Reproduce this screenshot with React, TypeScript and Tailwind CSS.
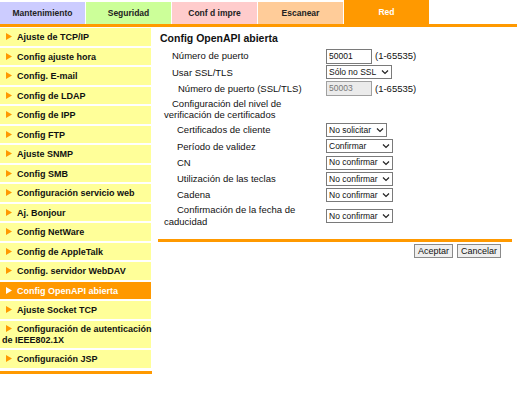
import React from 'react'

const tabs = [
  { label: 'Mantenimiento', bg: 'bg-[#ccccff]', active: false },
  { label: 'Seguridad', bg: 'bg-[#ccff99]', active: false },
  { label: 'Conf d impre', bg: 'bg-[#ffcccc]', active: false },
  { label: 'Escanear', bg: 'bg-[#ffcc99]', active: false },
  { label: 'Red', bg: 'bg-[#ff9900]', active: true },
]

const menu = [
  'Ajuste de TCP/IP',
  'Config ajuste hora',
  'Config. E-mail',
  'Config de LDAP',
  'Config de IPP',
  'Config FTP',
  'Ajuste SNMP',
  'Config SMB',
  'Configuración servicio web',
  'Aj. Bonjour',
  'Config NetWare',
  'Config de AppleTalk',
  'Config. servidor WebDAV',
  'Config OpenAPI abierta',
  'Ajuste Socket TCP',
  'Configuración de autenticación de IEEE802.1X',
  'Configuración JSP',
]

function Arrow({ white }: { white?: boolean }) {
  return (
    <svg width="6" height="7" viewBox="0 0 6 7" className="inline-block mr-[5px] align-[0px]">
      <polygon points="0,0 6,3.5 0,7" fill={white ? '#ffffff' : '#ff9900'} />
    </svg>
  )
}

function Select({ value, w }: { value: string; w: string }) {
  return (
    <div className={`${w} h-[14px] border border-[#7a7a7a] bg-white flex items-center justify-between pl-[2px] pr-[2px]`}>
      <span className="text-[8.5px] leading-none">{value}</span>
      <svg width="8" height="6" viewBox="0 0 8 6">
        <polyline points="1,1.5 4,4.5 7,1.5" fill="none" stroke="#222" strokeWidth="1.2" />
      </svg>
    </div>
  )
}

function Row({ label, indent, children, two }: { label: React.ReactNode; indent: string; children?: React.ReactNode; two?: boolean }) {
  return (
    <div className={`flex items-center ${two ? 'h-[25px]' : 'h-[16.3px]'}`}>
      <div className="w-[162px] leading-[11.5px]">
        <span className={`inline-block ${indent}`} />
        {label}
      </div>
      <div className="flex items-center gap-[3px]">{children}</div>
    </div>
  )
}

export default function App() {
  return (
    <div className="w-[517px] h-[415px] bg-white text-black" style={{ fontFamily: '"Liberation Sans", Arial, sans-serif' }}>
      {/* tabs */}
      <div className="flex h-[24px] gap-[1px]">
        {tabs.map((t) => (
          <div key={t.label} className={`w-[85px] ${t.active ? 'pt-0' : 'pt-[2px]'} flex`}>
            <div className={`${t.bg} flex-1 flex items-center justify-center text-[8.5px] font-bold ${t.active ? 'text-white' : 'text-[#222]'}`}>
              {t.label}
            </div>
          </div>
        ))}
      </div>
      <div className="h-[3px] bg-[#ff9900]" />

      <div className="flex pt-[1px]">
        {/* sidebar */}
        <div className="w-[151px] flex flex-col">
          {menu.map((m, i) => {
            const active = i === 13
            const two = m.length > 30
            return (
              <div
                key={m}
                className={`${active ? 'bg-[#ff9900] text-white' : 'bg-[#ffff99] text-[#111]'} ${two ? 'h-[27.5px] pt-[3px] leading-[11px]' : 'h-[17.5px] flex items-center pt-[2px]'} mb-[2px] pl-[6px] text-[9px] font-bold whitespace-nowrap`}
              >
                {two ? (
                  <>
                    <div>
                      <Arrow />
                      <span>Configuración de autenticación</span>
                    </div>
                    <div className="-ml-[4px]">de IEEE802.1X</div>
                  </>
                ) : (
                  <span>
                    <Arrow white={active} />
                    {m}
                  </span>
                )}
              </div>
            )
          })}
          <div className="h-[3px] bg-[#ff9900] mt-[1px] mr-[-1px]" />
        </div>

        {/* content */}
        <div className="ml-[7px] w-[354px] text-[9.5px] text-[#111]">
          <div className="pt-[2px] pl-[2px] h-[20px] text-[10.5px] font-bold leading-[16px]">Config OpenAPI abierta</div>
          <div className="pl-[6px]">
            <Row label="Número de puerto" indent="w-[8px]">
              <div className="w-[46px] h-[15px] border border-[#7a7a7a] bg-white text-[8.5px] leading-[13px] pl-[2px]">50001</div>
              <span>(1-65535)</span>
            </Row>
            <Row label="Usar SSL/TLS" indent="w-[8px]">
              <Select value="Sólo no SSL" w="w-[66px]" />
            </Row>
            <Row label="Número de puerto (SSL/TLS)" indent="w-[14px]">
              <div className="w-[46px] h-[15px] border border-[#a0a0a0] bg-[#ebebeb] text-[8.5px] leading-[13px] pl-[2px] text-[#777]">50003</div>
              <span>(1-65535)</span>
            </Row>
            <Row label="Configuración del nivel de verificación de certificados" indent="w-[8px]" two />
            <Row label="Certificados de cliente" indent="w-[13px]">
              <Select value="No solicitar" w="w-[61px]" />
            </Row>
            <Row label="Período de validez" indent="w-[13px]">
              <Select value="Confirmar" w="w-[67px]" />
            </Row>
            <Row label="CN" indent="w-[13px]">
              <Select value="No confirmar" w="w-[67px]" />
            </Row>
            <Row label="Utilización de las teclas" indent="w-[13px]">
              <Select value="No confirmar" w="w-[67px]" />
            </Row>
            <Row label="Cadena" indent="w-[13px]">
              <Select value="No confirmar" w="w-[67px]" />
            </Row>
            <Row label="Confirmación de la fecha de caducidad" indent="w-[13px]" two>
              <Select value="No confirmar" w="w-[67px]" />
            </Row>
          </div>
          <div className="h-[3px] bg-[#ff9900] mt-[11px]" />
          <div className="flex justify-end gap-[4px] mt-[2px] pr-[11px]">
            <button className="h-[14px] px-[3px] border border-[#8a8a8a] bg-[#efefef] text-[9px] leading-[12px]">Aceptar</button>
            <button className="h-[14px] px-[3px] border border-[#8a8a8a] bg-[#efefef] text-[9px] leading-[12px]">Cancelar</button>
          </div>
        </div>
      </div>
    </div>
  )
}
